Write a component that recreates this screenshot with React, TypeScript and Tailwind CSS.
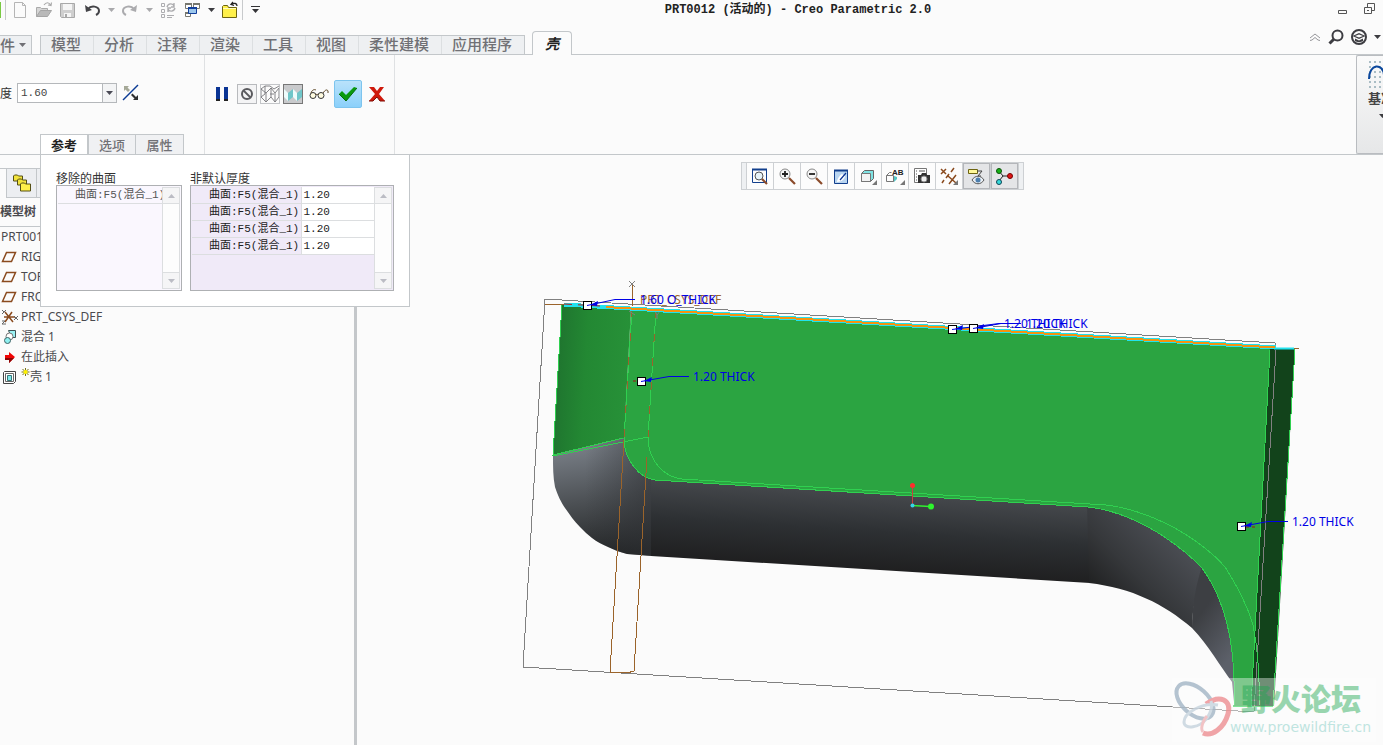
import type { ReactNode } from "react";

const ribbonTabs = ["模型", "分析", "注释", "渲染", "工具", "视图", "柔性建模", "应用程序"];

const thicknessRows = [
  { surface: "曲面:F5(混合_1)", value: "1.20" },
  { surface: "曲面:F5(混合_1)", value: "1.20" },
  { surface: "曲面:F5(混合_1)", value: "1.20" },
  { surface: "曲面:F5(混合_1)", value: "1.20" },
];

function Icon({ size = 18, children }: { size?: number; children: ReactNode }) {
  return (
    <svg width={size} height={size} viewBox={`0 0 ${size} ${size}`} fill="none" className="shrink-0" aria-hidden="true">
      {children}
    </svg>
  );
}

function Caret({ color = "#3c3c40" }: { color?: string }) {
  return (
    <svg width="7" height="4" viewBox="0 0 7 4" className="shrink-0" aria-hidden="true">
      <path d="M0 0h7L3.5 4z" fill={color} />
    </svg>
  );
}

function QuickButton({ label, narrow, children }: { label: string; narrow?: boolean; children: ReactNode }) {
  return (
    <button
      type="button"
      aria-label={label}
      className={`flex h-[18px] shrink-0 items-center justify-center ${narrow ? "w-[14px]" : "w-6"}`}
    >
      {children}
    </button>
  );
}

function QuickAccess() {
  return (
    <div className="flex w-[267px] shrink-0 items-center">
      <div className="h-4 w-px bg-[#7ac943]" />
      <div className="ml-1 h-5 w-px bg-[#c8cacc]" />
      <div className="ml-[3px] flex items-center">
        <QuickButton label="New">
          <Icon>
            <path d="M3.5 1.5h8l3 3v12h-11z" fill="#fbfbfb" stroke="#b5b5b5" />
            <path d="M11.5 1.5v3h3" stroke="#b5b5b5" />
          </Icon>
        </QuickButton>
        <QuickButton label="Open">
          <Icon>
            <path d="M1.5 15.5v-9h4l1 1h6v3" fill="#d6d6d6" stroke="#a9a9a9" />
            <path d="M1.5 15.5l4-6h11l-4 6z" fill="#b9b9b9" stroke="#a5a5a5" />
            <path d="M9 4c2-3 5-3 6.500 0M16.500 1.500l-.5 3-3-.5" stroke="#aaa" strokeWidth="1.200" />
          </Icon>
        </QuickButton>
        <QuickButton label="Save">
          <Icon>
            <path d="M1.500 2.500h14v14h-13l-1-1z" fill="#cfcfcf" stroke="#a8a8a8" />
            <path d="M4 3h9v6H4z" fill="#f5f5f5" />
            <path d="M5 12h7v4H5z" fill="#f5f5f5" />
            <path d="M6 13h2v3H6z" fill="#a8a8a8" />
          </Icon>
        </QuickButton>
        <QuickButton label="Undo">
          <Icon>
            <path d="M5 8c3-4 11-3 11 2 0 2-1 3-3 4" stroke="#444448" strokeWidth="2" />
            <path d="M2 4l1 7 6-2z" fill="#444448" />
          </Icon>
        </QuickButton>
        <QuickButton label="Undo list" narrow>
          <Caret color="#a9a9ac" />
        </QuickButton>
        <QuickButton label="Redo">
          <Icon>
            <path d="M13 8C10 4 2 5 2 10c0 2 1 3 3 4" stroke="#ababae" strokeWidth="2" />
            <path d="M16 4l-1 7-6-2z" fill="#ababae" />
          </Icon>
        </QuickButton>
        <QuickButton label="Redo list" narrow>
          <Caret color="#a9a9ac" />
        </QuickButton>
        <QuickButton label="Regenerate">
          <Icon>
            <path d="M2.500 2.500h3v3h-3zM2.500 8.500h3v3h-3zM2.500 13.500h3v3h-3zM8 14.500h7M8 16.500h5" stroke="#adadb0" />
            <path d="M8 6c1-4 6-4 7-1M16 7c-1 4-6 4-7 1M15 2v4h-3M9 11V7h3" stroke="#adadb0" strokeWidth="1.400" />
          </Icon>
        </QuickButton>
        <QuickButton label="Windows">
          <Icon>
            <path d="M2.500 2.500h6v5h-6zM10.500 2.500h6v5h-6zM2.500 11.500h5v4h-5z" fill="#fff" stroke="#77776f" />
            <path d="M2 3h7M10 3h7M2 12h6" stroke="#77776f" strokeWidth="2" />
            <path d="M5.500 6.500h8v6h-8z" fill="#9cc7ec" stroke="#123f9c" />
            <path d="M5 7h9" stroke="#123f9c" strokeWidth="2" />
          </Icon>
        </QuickButton>
        <QuickButton label="Window list" narrow>
          <Caret />
        </QuickButton>
        <QuickButton label="Close window">
          <Icon>
            <path d="M1.500 16.500v-11l1-1h4l1 2h8v10z" fill="#fff04a" stroke="#6d6411" />
            <path d="M2 7.500h13" stroke="#fffbc0" />
            <path d="M16 5c0-3-3-3-5-2M12 1l-2 2.500 3 1" stroke="#222" strokeWidth="1.300" />
          </Icon>
        </QuickButton>
      </div>
      <div className="h-5 w-px bg-[#c8cacc]" />
      <QuickButton label="Customize toolbar">
        <svg width="9" height="8" viewBox="0 0 9 8" aria-hidden="true">
          <path d="M0 0h9v1H0zM1 3h7L4.500 7z" fill="#333336" />
        </svg>
      </QuickButton>
    </div>
  );
}

function TitleBar() {
  return (
    <header className="flex h-5 items-center">
      <QuickAccess />
      <h1 className="flex-1 truncate text-center font-['Liberation_Mono','Noto_Sans_CJK_SC',monospace] text-[12px] leading-[18px] font-bold text-[#222]">
        PRT0012 (活动的) - Creo Parametric 2.0
      </h1>
      <div className="flex w-[54px] shrink-0 items-center gap-3 pl-[6px]">
        <button type="button" aria-label="Minimize">
          <Icon size={16}>
            <path d="M3.500 8.500h8v3h-8z" stroke="#555" />
          </Icon>
        </button>
        <button type="button" aria-label="Restore">
          <Icon size={16}>
            <path d="M4.500 5.500v-4h7v7H9M1.500 5.500h7v6h-7zM4 8.500h2" stroke="#555" />
          </Icon>
        </button>
      </div>
    </header>
  );
}

function RibbonTabs() {
  return (
    <nav className="flex h-[35px] items-end font-['Noto_Sans','Noto_Sans_CJK_SC',sans-serif]">
      <button
        type="button"
        className="flex h-5 w-8 items-center gap-1 border border-l-0 border-[#c3c7ca] bg-[#eef0f2] text-[15px] leading-4 font-medium text-[#707075]"
      >
        件<Caret color="#707075" />
      </button>
      <div className="h-5 w-2 border-b border-[#c3c7ca]" />
      <div className="flex h-5 border border-[#c3c7ca] bg-[#eef0f2]">
        {ribbonTabs.map((tab) => (
          <button
            key={tab}
            type="button"
            className="flex items-start border-r border-[#dcdfe1] pr-3 pl-[10px] text-[15px] leading-4 font-medium whitespace-nowrap text-[#707075] last:border-r-0"
          >
            {tab}
          </button>
        ))}
      </div>
      <div className="h-5 w-[7px] border-b border-[#c3c7ca]" />
      <button
        type="button"
        className="h-6 w-10 rounded-t-sm border border-b-0 border-[#c3c7ca] bg-[#fbfbfb] text-[14px] leading-6 font-bold text-[#222] italic"
      >
        壳
      </button>
      <div className="flex h-[35px] flex-1 items-center justify-end gap-[7px] overflow-hidden border-b border-[#c3c7ca]">
        <button type="button" aria-label="Minimize ribbon">
          <Icon size={12}>
            <path d="M1 7l5-4 5 4M1 9.500l2-.5 3-2.500 3 2.500 2 .5" stroke="#96969a" />
          </Icon>
        </button>
        <button type="button" aria-label="Search">
          <Icon size={16}>
            <circle cx="9.500" cy="6.500" r="5" stroke="#3d3d42" strokeWidth="2" />
            <path d="M6 10l-4.500 4.500" stroke="#3d3d42" strokeWidth="3" />
          </Icon>
        </button>
        <button type="button" aria-label="Learning">
          <Icon size={16}>
            <circle cx="8" cy="8" r="7" stroke="#3d3d42" strokeWidth="2" />
            <path d="M1.500 7L8 4l6.500 3L8 10zM4 9.500v2.500c2 1.500 6 1.500 8 0V9.500L8 11.500z" fill="#3d3d42" />
            <path d="M4 7l4-1.500L12 7 8 8.500z" fill="#fbfbfb" />
          </Icon>
        </button>
        <button type="button" aria-label="Learning list" className="pr-[2px]">
          <Caret />
        </button>
      </div>
    </nav>
  );
}

function ShellInputs() {
  return (
    <section className="flex w-[205px] shrink-0 flex-col justify-between border-r border-[#dfe1e3]">
      <div className="flex items-center pt-7">
        <label htmlFor="thickness" className="w-[17px] pt-[2px] text-[12px] leading-4 text-[#333]">
          度
        </label>
        <div className="flex h-5 w-[100px] border border-[#b5b8bb] bg-white">
          <input
            id="thickness"
            defaultValue="1.60"
            className="w-0 flex-1 px-[3px] font-['Liberation_Mono',monospace] text-[11px] text-[#444] outline-none"
          />
          <button
            type="button"
            aria-label="Thickness list"
            className="flex w-[14px] items-center justify-center border-l border-[#b5b8bb] bg-[#f3f4f5]"
          >
            <Caret color="#4a4a55" />
          </button>
        </div>
        <button type="button" aria-label="Flip direction" className="ml-[5px]">
          <Icon>
            <path d="M1 16L16 1" stroke="#0a3a94" strokeWidth="1.500" />
            <path d="M2 2h5L5.500 3.500 8 6 6 8 3.500 5.500 2 7z" fill="#a5a897" />
            <path d="M16 16h-5l1.500-1.500L9 11l1.500-1.500 3.500 3.500 2-2z" fill="#2f2f2f" />
          </Icon>
        </button>
      </div>
      <div className="flex pl-10 text-[13px] leading-4">
        <button type="button" className="h-5 w-12 border border-b-0 border-[#c3c7ca] bg-white font-bold text-[#222]">
          参考
        </button>
        <button type="button" className="h-5 w-12 border border-b-0 border-[#c3c7ca] bg-[#f0f1f3] font-medium text-[#707075]">
          选项
        </button>
        <button type="button" className="h-5 w-12 border border-b-0 border-l-0 border-[#c3c7ca] bg-[#f0f1f3] font-medium text-[#707075]">
          属性
        </button>
      </div>
    </section>
  );
}

function ShellControls() {
  return (
    <section className="flex w-[190px] shrink-0 items-start gap-[3px] border-r border-[#dfe1e3] pt-[25px] pl-[6px]">
      <button type="button" aria-label="Pause" className="flex h-7 w-[22px] items-center justify-center">
        <Icon size={14}>
          <path d="M1 0h4v14H1zM9 0h4v14H9z" fill="#0a3494" />
          <path d="M1 12h4v2H1zM9 12h4v2H9z" fill="#222" />
        </Icon>
      </button>
      <button type="button" aria-label="No preview" className="my-1 ml-px flex size-5 items-center justify-center border border-[#b8babd] bg-[#f4f4f5]">
        <Icon size={14}>
          <circle cx="7" cy="7" r="5" stroke="#5a5a5e" strokeWidth="2" />
          <path d="M3.500 3.500l7 7" stroke="#5a5a5e" strokeWidth="1.800" />
        </Icon>
      </button>
      <button type="button" aria-label="Wireframe preview" className="my-1 flex size-5 items-center justify-center border border-[#c3c5c8]">
        <svg width="18" height="18" viewBox="0 0 18 18" fill="none" aria-hidden="true">
          <path
            d="M0 4l4-3h5l4 3 5-3M0 4l5 4 5-5 4 5 4-5M0 4v8l5 5V8M5 17l5-5V3M10 12l4 5V8M14 17l4-5V3M4 1v8l-4 3M9 9l4 0"
            stroke="#77777a"
            strokeWidth="0.900"
          />
        </svg>
      </button>
      <button type="button" aria-label="Attached preview" className="my-1 flex size-5 items-center justify-center border border-[#777] bg-[#c9cacc]">
        <svg width="18" height="18" viewBox="0 0 18 18" aria-hidden="true">
          <path d="M0 4l4 4v8l-4-4zM9 4l4 4v8l-4-4z" fill="#eefcfc" />
          <path d="M4 8l5-4v8l-5 4zM13 8l5-4v8l-5 4z" fill="#6fc6c9" />
        </svg>
      </button>
      <button type="button" aria-label="Verify" className="ml-[2px] flex h-7 w-[22px] items-center justify-center">
        <svg width="20" height="12" viewBox="0 0 20 12" fill="none" aria-hidden="true">
          <circle cx="4" cy="7.500" r="3" fill="#fffbe0" stroke="#333" />
          <circle cx="12" cy="7.500" r="3" fill="#fffbe0" stroke="#333" />
          <path d="M7 7c0-1 2-1 2 0M2 5c1-3 3-4 5-3M14 5c2-3 4-4 5-2v2" stroke="#5b4423" />
        </svg>
      </button>
      <button type="button" aria-label="Apply" className="ml-px flex size-7 items-center justify-center rounded-xs border border-[#7dc4ee] bg-linear-to-b from-[#b9e2fb] to-[#8bd0fa]">
        <Icon>
          <path d="M0 9l3-3 4 4 8-8 3 1L7 16z" fill="#0a9a0e" />
          <path d="M0 9l7 7L18 3" stroke="#056b0a" />
        </Icon>
      </button>
      <button type="button" aria-label="Cancel" className="flex h-7 w-6 items-center justify-center">
        <Icon size={16}>
          <path d="M0 1h5l3 4 3-4h4l-5 7 6 7h-5l-3-4-4 4H0l6-7z" fill="#cf1a0c" />
          <path d="M0 15h4l4-4 3 4h5" stroke="#7d0d05" />
        </Icon>
      </button>
    </section>
  );
}

function Dashboard() {
  return (
    <div className="flex h-[100px] border-b border-[#c3c7ca]">
      <ShellInputs />
      <ShellControls />
      <div className="flex-1" />
      <button
        type="button"
        className="flex w-[27px] shrink-0 flex-col overflow-hidden rounded-l-xs border border-r-0 border-[#b9bcc0] bg-linear-to-b from-[#fafafa] to-[#e6e7e8] pt-1 pl-[11px] text-[13px] font-bold text-[#444]"
      >
        <svg width="28" height="30" viewBox="0 0 28 30" fill="none" className="shrink-0" aria-hidden="true">
          <g fill="#a9bcc4">
            {[1, 6, 11, 16, 21].map((x) =>
              [1, 6, 11, 16, 21, 26].map((y) => <rect key={`${x}-${y}`} x={x} y={y} width="2" height="2" />),
            )}
          </g>
          <path d="M1 19C1 3 15 3 16 15" stroke="#0b479c" strokeWidth="2" />
        </svg>
        <span className="leading-4 whitespace-nowrap">基准</span>
        <span className="pt-2 pl-[11px]">
          <Caret />
        </span>
      </button>
    </div>
  );
}

function ScrollTrack() {
  return (
    <div className="flex w-[18px] shrink-0 flex-col justify-between border border-[#dcdee0] bg-[#fdfdfd]">
      <button type="button" aria-label="Scroll up" className="flex h-4 items-center justify-center border-b border-[#dcdee0] bg-[#f5f5f6]">
        <span className="rotate-180">
          <Caret color="#bbbcc4" />
        </span>
      </button>
      <button type="button" aria-label="Scroll down" className="flex h-4 items-center justify-center border-t border-[#dcdee0] bg-[#f5f5f6]">
        <Caret color="#bbbcc4" />
      </button>
    </div>
  );
}

function ReferencePanel() {
  return (
    <div className="absolute top-0 left-10 z-10 flex h-[152px] w-[370px] gap-2 border border-t-0 border-[#c3c7ca] bg-white pt-[17px] pl-[15px] text-[12px] text-[#333]">
      <div>
        <div className="leading-[13px]">移除的曲面</div>
        <div className="flex h-[106px] w-[126px] border border-[#aeb0b3] bg-[#faf7fe] p-px">
          <ul className="flex-1 overflow-hidden">
            <li className="border-b border-[#dcdee0] pl-[17px] font-['Liberation_Mono','Noto_Sans_CJK_SC',monospace] text-[11px] leading-4 whitespace-nowrap text-[#555]">
              曲面:F5(混合_1)
            </li>
          </ul>
          <ScrollTrack />
        </div>
      </div>
      <div>
        <div className="leading-[13px]">非默认厚度</div>
        <div className="flex h-[106px] w-[204px] items-stretch border border-[#aeb0b3] bg-[#f0eaf8] p-px">
          <div className="flex-1">
            <table className="w-full border-collapse font-['Liberation_Mono','Noto_Sans_CJK_SC',monospace] text-[11px] leading-4 text-[#222]">
              <tbody>
                {thicknessRows.map((row, i) => (
                  <tr key={i} className="border-b border-[#dcdee0]">
                    <td className="p-0 pl-[17px] whitespace-nowrap">{row.surface}</td>
                    <td className="w-[73px] border-l border-[#dcdee0] bg-white p-0 pl-[2px]">{row.value}</td>
                  </tr>
                ))}
              </tbody>
            </table>
          </div>
          <ScrollTrack />
        </div>
      </div>
    </div>
  );
}

function PlaneIcon() {
  return (
    <Icon>
      <path d="M2.500 13.500l4-9h9l-4 9z" stroke="#8a4a1e" strokeWidth="1.500" />
    </Icon>
  );
}

function TreeRow({ icon, children }: { icon?: ReactNode; children: ReactNode }) {
  return (
    <li className="flex h-5 items-center gap-[3px]">
      {icon}
      <span className="whitespace-nowrap">{children}</span>
    </li>
  );
}

function ModelTree() {
  return (
    <aside className="w-[357px] shrink-0 border-r-[3px] border-[#c4c7ca] pt-[13px] text-[12px] text-[#4a4a4e]">
      <div className="flex h-[30px]">
        <div className="w-[6px] border-t border-[#c3c7ca]" />
        <button type="button" aria-label="Model tree" className="flex w-[31px] items-center justify-center border border-[#c3c7ca] bg-[#eceef1]">
          <Icon size={20}>
            <path d="M1.500 8V3l1-1h3l1 1h4v5z" fill="#f2e33c" stroke="#555016" />
            <path d="M5.500 12V7l1-1h3l1 1h4v5z" fill="#f2e33c" stroke="#555016" />
            <path d="M8.500 18v-7l1-1h3l1 1h5v7z" fill="#fff04a" stroke="#555016" />
          </Icon>
        </button>
        <div className="flex-1 border border-l-0 border-[#c3c7ca] bg-[#eceef1]" />
      </div>
      <h2 className="h-[29px] border-b border-[#c3c7ca] text-[12px] leading-7 font-bold">模型树</h2>
      <ul className="font-['Noto_Sans','Noto_Sans_CJK_SC',sans-serif]">
        <li className="h-5 pl-px leading-5">PRT0012.PRT</li>
        <TreeRow icon={<PlaneIcon />}>RIGHT</TreeRow>
        <TreeRow icon={<PlaneIcon />}>TOP</TreeRow>
        <TreeRow icon={<PlaneIcon />}>FRONT</TreeRow>
        <TreeRow
          icon={
            <Icon>
              <path d="M4 9h11M5 4l8 10M12 4L5 14" stroke="#8a4a1e" strokeWidth="1.500" />
              <path d="M2 2l2 2 2-2M4 4L2 6M14 8l4 4M18 8l-4 4M2 13h3l-3 3h4" stroke="#666" />
            </Icon>
          }
        >
          PRT_CSYS_DEF
        </TreeRow>
        <TreeRow
          icon={
            <Icon>
              <path d="M8.500 2.500h7v7h-4z" fill="#9af1f3" stroke="#3e5255" />
              <circle cx="9.500" cy="8.500" r="3.500" fill="#fff" stroke="#777" />
              <circle cx="7.500" cy="12.500" r="3" fill="#8ff0f0" stroke="#3e6265" />
            </Icon>
          }
        >
          混合 1
        </TreeRow>
        <TreeRow
          icon={
            <Icon>
              <path d="M5 7h4V4l6 5-6 6v-3H5z" fill="#f00505" />
              <path d="M5 10h9l-5 5v-3H5z" fill="#8c0505" />
            </Icon>
          }
        >
          在此插入
        </TreeRow>
        <TreeRow
          icon={
            <Icon>
              <path d="M3.500 4.500l1-1h11v10l-2 2h-10z" fill="#fff" stroke="#444" />
              <path d="M5.500 5.500h8v8h-8z" fill="#fff" stroke="#666" />
              <path d="M7.500 7.500h4v5h-4z" fill="#7fe8ea" stroke="#35777a" />
            </Icon>
          }
        >
          <svg width="9" height="14" viewBox="0 0 9 14" className="inline-block align-top" aria-hidden="true">
            <path d="M4.500 0v8M.5 4h8M1.500 1l6 6M7.500 1l-6 6" stroke="#7a7410" />
            <circle cx="4.500" cy="4" r="2" fill="#fff200" />
          </svg>
          壳 1
        </TreeRow>
      </ul>
    </aside>
  );
}

function ViewButton({ label, active, children }: { label: string; active?: boolean; children: ReactNode }) {
  return (
    <button
      type="button"
      aria-label={label}
      className={`flex items-center justify-center border-r border-[#cdd0d3] ${active ? "w-7 bg-[#e4e5e7] shadow-[inset_0_0_0_1px_#b4b6ba]" : "w-[27px] bg-[#fcfcfc]"}`}
    >
      {children}
    </button>
  );
}

function ViewToolbar() {
  const corner = <path d="M18 13v5h-5z" fill="#777" />;
  return (
    <div className="flex h-7 border border-[#cdd0d3] bg-[#eef0f2]">
      <div className="w-[5px] border-r border-[#cdd0d3]" />
      <ViewButton label="Refit">
        <Icon>
          <path d="M1.500 2.500h14v13h-14z" stroke="#123f8c" />
          <path d="M1 2.500h15" stroke="#123f8c" strokeWidth="2" />
          <circle cx="8" cy="9" r="4" fill="#e7f3f8" stroke="#555" />
          <path d="M11 12l5 5" stroke="#8a4a2a" strokeWidth="2.200" />
        </Icon>
      </ViewButton>
      <ViewButton label="Zoom in">
        <Icon>
          <circle cx="7" cy="7" r="5" fill="#f6f6f6" stroke="#888" />
          <path d="M4 7h6M7 4v6" stroke="#222" strokeWidth="1.800" />
          <path d="M11 11l6 6" stroke="#8a4a2a" strokeWidth="2.200" />
        </Icon>
      </ViewButton>
      <ViewButton label="Zoom out">
        <Icon>
          <circle cx="7" cy="7" r="5" fill="#f6f6f6" stroke="#888" />
          <path d="M4 7h6" stroke="#222" strokeWidth="1.800" />
          <path d="M11 11l6 6" stroke="#8a4a2a" strokeWidth="2.200" />
        </Icon>
      </ViewButton>
      <ViewButton label="Repaint">
        <Icon>
          <path d="M2.500 3.500h13v13h-13z" fill="#b9d5f0" stroke="#123f8c" />
          <path d="M2 3.500h14" stroke="#123f8c" strokeWidth="2" />
          <path d="M5 15c0-3 3-7 5-8l3 2c0 3-4 6-8 6z" fill="#fff" />
          <path d="M14 6L8 13" stroke="#0a3494" strokeWidth="1.200" />
        </Icon>
      </ViewButton>
      <ViewButton label="Display style">
        <Icon>
          <path d="M2.500 6.500l3-3h9v8l-3 3h-9z" fill="#7fe3e3" stroke="#666" />
          <path d="M2.500 6.500h9v8h-9z" fill="#f3f3f3" stroke="#777" />
          {corner}
        </Icon>
      </ViewButton>
      <ViewButton label="Saved orientations">
        <svg width="20" height="18" viewBox="0 0 20 18" fill="none" aria-hidden="true">
          <path d="M1.500 14.500v-6h7v6zM1.500 8.500l3-3h2M8.500 14.500l3-3" stroke="#777" />
          <path d="M9 9l3 1v2l-3 3z" fill="#55c6c6" />
          <text x="7" y="8" fontSize="8" fontWeight="bold" fill="#222" fontFamily="Liberation Sans, sans-serif">
            AB
          </text>
          <path d="M20 13v5h-5z" fill="#777" />
        </svg>
      </ViewButton>
      <ViewButton label="View manager">
        <Icon>
          <path d="M1.500 1.500h12v14h-12z" fill="#fff" stroke="#777" />
          <path d="M3 4h1M3 7h1M3 10h1M3 13h1M6 4h6" stroke="#555" />
          <path d="M5 8h3l1-2h4l1 2h3v8H5z" fill="#333" />
          <circle cx="11" cy="12" r="3" fill="#eee" stroke="#888" />
        </Icon>
      </ViewButton>
      <ViewButton label="Datum display">
        <Icon>
          <path d="M1 2l5 5M6 2L1 7M14 1l-3 4M9 7l-3 4M4 13l-2 3M8 9l8 7M16 8l-7 9" stroke="#8a4a1e" strokeWidth="1.500" />
          {corner}
        </Icon>
      </ViewButton>
      <ViewButton label="Annotation display" active>
        <Icon>
          <path d="M1.500 2.500h9v4h-9z" fill="#fff89a" stroke="#6d6411" />
          <path d="M10 4h5l-4 5h3" stroke="#444" />
          <path d="M5 13c3-5 9-5 12 0-3 5-9 5-12 0z" fill="#e8edf2" stroke="#555" />
          <circle cx="11" cy="13" r="2.500" fill="#4e7fae" />
        </Icon>
      </ViewButton>
      <ViewButton label="Spin center" active>
        <Icon>
          <path d="M4 4l4 5-4 5M8 9h6" stroke="#222" />
          <circle cx="4" cy="4" r="2.500" fill="#16b416" stroke="#0b500b" />
          <circle cx="4" cy="15" r="2.500" fill="#35dada" stroke="#145" />
          <circle cx="15" cy="9" r="2.500" fill="#e01414" stroke="#700" />
        </Icon>
      </ViewButton>
      <div className="w-1" />
    </div>
  );
}

// anchor point of the handle, plus the leader's landing point and its label
const handles = [
  { x: 587, y: 305, lx: 615, ly: 299, tx: 640, text: "1.60 O_THICK" },
  { x: 641, y: 381, lx: 669, ly: 376, tx: 693, text: "1.20 THICK" },
  { x: 952, y: 329, lx: 999, ly: 323, tx: 1004, text: "1.20 THICK" },
  { x: 973, y: 328, lx: 1001, ly: 323, tx: 1026, text: "1.20 THICK" },
  { x: 1241, y: 526, lx: 1268, ly: 521, tx: 1292, text: "1.20 THICK" },
];

const cornerOutline =
  "M553 455c0 12 0 22 2 32 3 9 6 15 10 21 5 7 9 13 15 19 4 4 8 8 12 11 5 4 10 6 16 9 6 3 12 5 19 7l25 2V470L624 438z";

function Watermark() {
  return (
    <g>
      <rect x="1172" y="678" width="204" height="64" fill="#fff" opacity="0.4" />
      <g fill="none" opacity="0.8">
        <ellipse cx="1195" cy="701" rx="22" ry="13" transform="rotate(42 1195 701)" stroke="#a3b6c6" strokeWidth="4" />
        <path d="M1206 704c14-10 26-4 22 10-4 14-16 23-25 19" stroke="#ee8f92" strokeWidth="5" />
        <path d="M1218 705c-16-3-34 8-34 17 0 8 16 6 23-4 4-6 6-11 4-17" stroke="#c6d3de" strokeWidth="3" />
        <path d="M1203 732c-3-3 0-12 4-16" stroke="#f0b5b8" strokeWidth="3" />
      </g>
      <text x="1241" y="710" fontSize="30" fontWeight="900" fill="#20a650" opacity="0.45" fontFamily="Noto Sans CJK SC, sans-serif">
        野火论坛
      </text>
      <text x="1230" y="732" fontSize="14" fill="#9fd8d2" opacity="0.65" fontFamily="DejaVu Sans, sans-serif">
        www.proewildfire.cn
      </text>
    </g>
  );
}

function ModelDrawing() {
  return (
    <svg
      className="absolute inset-0 size-full"
      viewBox="357 155 1026 590"
      preserveAspectRatio="xMinYMin meet"
      role="img"
      aria-label="PRT0012"
      fill="none"
    >
      <defs>
        <linearGradient id="side" gradientUnits="userSpaceOnUse" x1="556" y1="380" x2="628" y2="384">
          <stop offset="0" stopColor="#1f752f" />
          <stop offset="0.4" stopColor="#238833" />
          <stop offset="1" stopColor="#279138" />
        </linearGradient>
        <linearGradient id="corner" gradientUnits="userSpaceOnUse" x1="590" y1="445" x2="606" y2="555">
          <stop offset="0" stopColor="#787e86" />
          <stop offset="0.5" stopColor="#4c5054" />
          <stop offset="1" stopColor="#222425" />
        </linearGradient>
        <linearGradient id="cornerShade" gradientUnits="userSpaceOnUse" x1="585" y1="0" x2="655" y2="0">
          <stop offset="0" stopColor="#303236" stopOpacity="0" />
          <stop offset="1" stopColor="#303236" stopOpacity="0.6" />
        </linearGradient>
        <linearGradient id="bottom" gradientUnits="userSpaceOnUse" x1="870" y1="492" x2="865" y2="570">
          <stop offset="0" stopColor="#45484c" />
          <stop offset="0.5" stopColor="#2d3033" />
          <stop offset="1" stopColor="#1f1f20" />
        </linearGradient>
        <linearGradient id="bend" gradientUnits="userSpaceOnUse" x1="1175" y1="535" x2="1110" y2="600">
          <stop offset="0" stopColor="#4c4f55" />
          <stop offset="0.6" stopColor="#36383b" />
          <stop offset="1" stopColor="#222324" />
        </linearGradient>
        <linearGradient id="tip" gradientUnits="userSpaceOnUse" x1="1232" y1="655" x2="1192" y2="625">
          <stop offset="0" stopColor="#5c6069" />
          <stop offset="1" stopColor="#3d3f43" />
        </linearGradient>
      </defs>

      {/* bounding outline of the datum planes */}
      <path d="M1254 712L523 667 545 299l730 44v7" stroke="#808080" shapeRendering="crispEdges" />

      {/* grey underside */}
      <path d={cornerOutline} fill="url(#corner)" />
      <path d={cornerOutline} fill="url(#cornerShade)" />
      <path d="M651 470l437 34 2 79-439-27z" fill="url(#bottom)" />
      <path d="M1087 504c50 8 90 34 117 66-7 20-12 38-12 58-28-24-60-40-103-45z" fill="url(#bend)" />
      <path d="M1202 566h10l28 84v52h-6l-2-20c-12-16-23-36-40-54 0-20 3-40 10-62z" fill="url(#tip)" />

      {/* green faces */}
      <path d="M562 304l69 5-7 129-71 17z" fill="url(#side)" />
      <path
        d="M631 308l640 39-20 359h-17c1-40-2-75-15-107-5-13-10-21-17-31-12-13-24-22-39-32-18-12-46-26-75-29L655 480c-15-2-31-19-31-42z"
        fill="#2ba441"
      />
      <path d="M1270 348h25l-21 358h-23z" fill="#12431b" />
      <path d="M1276 350l-22 361" stroke="#808080" shapeRendering="crispEdges" />

      <g stroke="#30d050" shapeRendering="crispEdges">
        <path d="M562 304l-9 151 70-17M553 456l95-19" />
        <path d="M632 309l-8 129c0 23 16 40 31 42l433 27c29 3 57 17 75 29 15 10 27 19 39 32 7 10 12 18 17 31 13 32 16 67 15 107h39l22-357" />
        <path d="M656 310l-8 127c0 24 16 40 34 42l408 25c30 0 54 9 75 19 17 8 45 26 60 44 11 18 21 34 28 58 5 25 7 50 6 81" />
        <path d="M1270 350l-19 356" />
      </g>

      {/* datum planes seen edge on */}
      <g stroke="#9b642b" shapeRendering="crispEdges">
        <path d="M633 285l-1 22M624 440l-14 232 17 1 7-2 13-214" />
        <path d="M632 309l-8 129M656 310l-8 127" strokeDasharray="8 16" />
        <path d="M545 304h20M1270 348h29" />
      </g>
      <path d="M629 281l6 6M635 281l-6 6M629 311l6 4M655 311l2 4 3-4M657 315v4" stroke="#808080" />

      {/* opened top surface */}
      <path d="M564 304.500l712 43" stroke="#22e2ee" strokeWidth="4" shapeRendering="crispEdges" />
      <path d="M1274 348.500h20" stroke="#22e2ee" strokeWidth="2" />
      <path d="M564 304l36 2" stroke="#c01818" strokeDasharray="8 6" />
      <path d="M606 307l669 40.500" stroke="#f5930f" strokeWidth="2" shapeRendering="crispEdges" />
      <path d="M633 381h8M1246 527h12" stroke="#a01010" strokeDasharray="3 3" />

      <text x="640" y="304" fontSize="12" fill="#9b642b" fontFamily="Noto Sans, sans-serif">
        PRT_CSYS_DEF
      </text>
      {handles.map((h) => (
        <g key={`${h.x}-${h.y}`}>
          <rect x={h.x - 3.5} y={h.y - 3.5} width="8" height="8" fill="#fff" stroke="#000" />
          <path d={`M${h.x} ${h.y + 0.5}L${h.lx} ${h.ly + 0.5}h20`} stroke="#0000e6" />
          <path d={`M${h.x + 3} ${h.y}l8-4-1 5z`} fill="#0000e6" />
          <text x={h.tx} y={h.ly + 5} fontSize="12" fill="#0000e6" fontFamily="Noto Sans, sans-serif">
            {h.text}
          </text>
        </g>
      ))}

      {/* spin center */}
      <path d="M912.500 487v18" stroke="#c8403f" />
      <path d="M912 505.500l18 1" stroke="#30f030" strokeWidth="1.500" />
      <circle cx="912.500" cy="485.500" r="2.500" fill="#ff2d2d" />
      <circle cx="912.500" cy="505.500" r="2" fill="#35d5e8" />
      <circle cx="931" cy="506.500" r="3" fill="#2df52d" />

      <Watermark />
    </svg>
  );
}

export default function App() {
  return (
    <div className="flex h-screen flex-col overflow-hidden bg-[#fbfbfb] font-['Noto_Sans','Noto_Sans_CJK_SC',sans-serif]">
      <TitleBar />
      <RibbonTabs />
      <Dashboard />
      <div className="relative flex min-h-0 flex-1">
        <ReferencePanel />
        <ModelTree />
        <main className="relative flex-1 overflow-hidden">
          <ModelDrawing />
          <div className="relative flex justify-center pt-[7px] pl-6">
            <ViewToolbar />
          </div>
        </main>
      </div>
    </div>
  );
}
